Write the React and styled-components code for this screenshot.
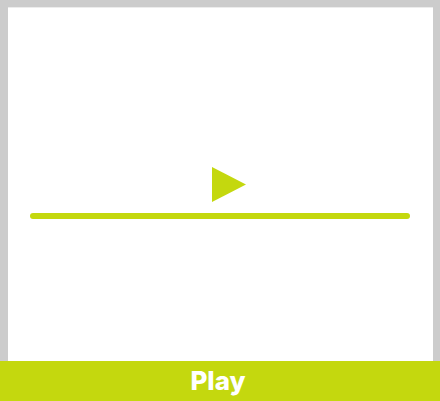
import React from "react";
import styled, { createGlobalStyle } from "styled-components";

const GlobalStyle = createGlobalStyle`
  html, body {
    margin: 0;
    padding: 0;
    background: #cccccc;
    font-family: "Inter", "Liberation Sans", sans-serif;
  }
`;

const Page = styled.div`
  width: 440px;
  height: 401px;
  display: flex;
  flex-direction: column;
`;

const Frame = styled.div`
  flex: 1;
  padding: 7px 7px 0 8px;
  display: flex;
`;

const Stage = styled.div`
  flex: 1;
  background: #ffffff;
  border-top: 1px solid #ececec;
  display: flex;
  flex-direction: column;
  align-items: center;
  padding: 159px 23px 0 22px;
`;

const PlayIcon = styled.svg`
  width: 34px;
  height: 35px;
  margin-left: 18px;
`;

const Track = styled.div`
  align-self: stretch;
  height: 6px;
  margin-top: 11px;
  border-radius: 3px;
  background: ${(props) => props.color};
`;

const BottomBar = styled.button`
  height: 40px;
  border: none;
  background: #c4d80e;
  color: #ffffff;
  font-family: "Inter", "Liberation Sans", sans-serif;
  font-weight: 800;
  font-size: 26px;
  display: flex;
  align-items: center;
  justify-content: center;
  padding: 0 4px 2px 0;
`;

const lime = "#c4d80e";

const App = () => {
  return (
    <Page>
      <GlobalStyle />
      <Frame>
        <Stage>
          <PlayIcon viewBox="0 0 34 35">
            <polygon points="0,0 34,17.5 0,35" fill={lime} />
          </PlayIcon>
          <Track color={lime} />
        </Stage>
      </Frame>
      <BottomBar>Play</BottomBar>
    </Page>
  );
};

export default App;
